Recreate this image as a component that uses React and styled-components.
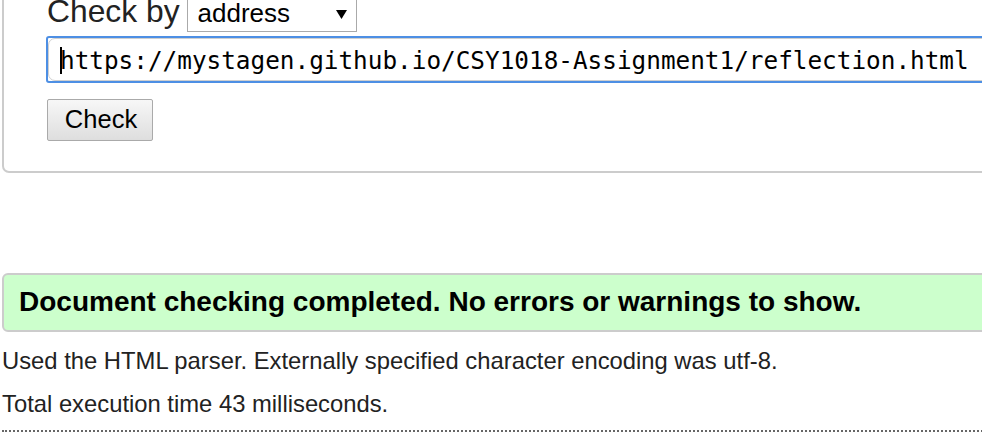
import React from "react";
import styled, { createGlobalStyle } from "styled-components";

const Global = createGlobalStyle`
  html, body { margin: 0; padding: 0; background: #fff; }
  body { overflow: hidden; font-family: "Liberation Sans", Arial, sans-serif; color: #222; }
`;

const Page = styled.div`
  width: 982px;
  height: 434px;
  overflow: hidden;
  padding-left: 2px;
  box-sizing: border-box;
`;

const FormPanel = styled.div`
  margin-top: -3px;
  width: 1100px;
  border: 2px solid #ccc;
  border-top: 0;
  border-radius: 0 0 7px 7px;
  padding: 0 0 30px 43px;
`;

const ModeRow = styled.div`
  display: flex;
  align-items: flex-start;
  height: 34px;
  padding-top: 1px;
`;

const Label = styled.span`
  font-size: 31.8px;
  line-height: 31px;
  margin-top: -2px;
  color: #222;
`;

const Select = styled.div`
  margin-left: 7px;
  width: 170px;
  height: 34px;
  box-sizing: border-box;
  border: 1px solid #aaa;
  background: #fff;
  display: flex;
  align-items: center;
  justify-content: space-between;
  padding: 0 10px 4px 10px;
  font-size: 26px;
  line-height: 26px;
  color: #000;
`;

const Arrow = styled.svg`
  width: 11px;
  height: 9px;
  margin-top: 2px;
  margin-right: -1px;
`;

const UrlBox = styled.div`
  margin: 4px 0 0 -1px;
  height: 47px;
  box-sizing: border-box;
  border: 2px solid #4d8fe4;
  border-radius: 3px;
  background: #fff;
`;

const UrlInner = styled.div`
  height: 100%;
  box-sizing: border-box;
  border: 1px solid #cfcfcf;
  border-radius: 7px;
  padding: 2px 0 0 11px;
  display: flex;
  align-items: center;
  font-family: "DejaVu Sans Mono", "Liberation Mono", monospace;
  font-size: 24.35px;
  color: #000;
  white-space: nowrap;
`;

const Caret = styled.span`
  display: inline-block;
  width: 2px;
  height: 27px;
  background: #000;
  margin-right: -2px;
  position: relative;
  z-index: 1;
`;

const CheckButton = styled.button`
  margin-top: 16px;
  width: 106px;
  height: 42px;
  border: 1px solid #aaa;
  border-radius: 2px;
  background: linear-gradient(#f7f7f7, #dedede);
  font-family: "Liberation Sans", Arial, sans-serif;
  font-size: 25.5px;
  color: #000;
  padding: 0 0 1px 2px;
  display: block;
`;

const Success = styled.div`
  margin-top: 100px;
  width: 1100px;
  border: 2px solid #ccc;
  border-radius: 6px;
  background: #ccffcc;
  padding: 11px 0 12px 15px;
  font-weight: bold;
  font-size: 28px;
  line-height: 32px;
  color: #000;
`;

const Note = styled.p`
  margin: ${(p) => p.$top}px 0 0 0;
  font-size: 23.8px;
  line-height: 28px;
  color: #222;
  white-space: nowrap;
`;

const Rule = styled.div`
  margin-top: 12px;
  width: 1100px;
  border-top: 2px dotted #666;
`;

export default function App() {
  return (
    <Page>
      <Global />
      <FormPanel>
        <ModeRow>
          <Label>Check by</Label>
          <Select>
            <span>address</span>
            <Arrow viewBox="0 0 11 9">
              <polygon points="0,0 11,0 5.5,9" fill="#000" />
            </Arrow>
          </Select>
        </ModeRow>
        <UrlBox>
          <UrlInner>
            <Caret />
            https://mystagen.github.io/CSY1018-Assignment1/reflection.html
          </UrlInner>
        </UrlBox>
        <CheckButton>Check</CheckButton>
      </FormPanel>
      <Success>Document checking completed. No errors or warnings to show.</Success>
      <Note $top={15}>Used the HTML parser. Externally specified character encoding was utf-8.</Note>
      <Note $top={15}>Total execution time 43 milliseconds.</Note>
      <Rule />
    </Page>
  );
}
